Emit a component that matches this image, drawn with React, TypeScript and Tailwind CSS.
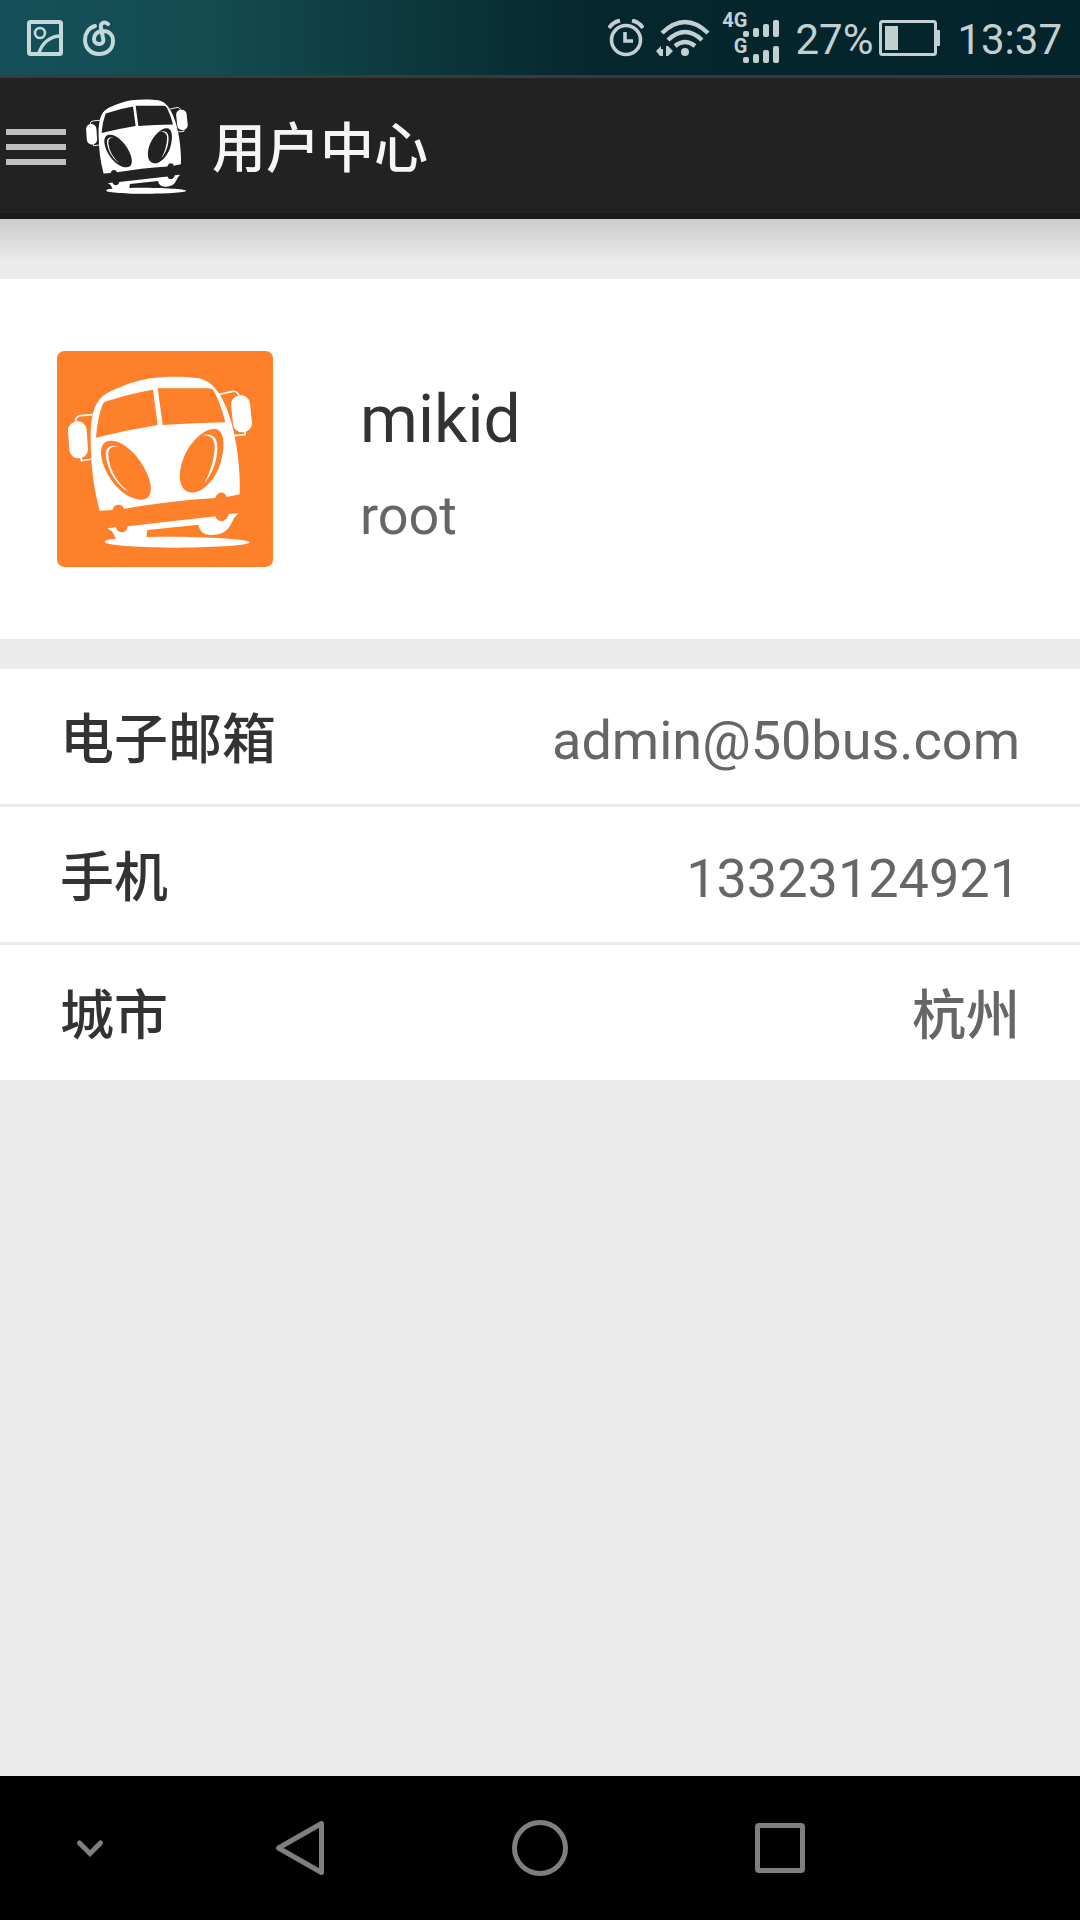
import React from "react";

const details = [
  { label: "电子邮箱", value: "admin@50bus.com", weight: "font-normal" },
  { label: "手机", value: "13323124921", weight: "font-normal" },
  { label: "城市", value: "杭州", weight: "font-medium" },
];

/* The bus mascot: white body, with the windows and lamps in the colour behind it. */
function Bus({ hole }: { hole: string }) {
  return (
    <>
      <g fill="none" stroke="#fff" strokeWidth="5">
        <path d="M128 208 L92 211 Q76 213 76 232" />
        <path d="M93 334 L94 346 L130 341" />
        <path d="M508 147 L548 138 Q564 136 568 156" />
        <path d="M586 256 L585 268 L550 271" />
      </g>
      <rect x="56" y="228" width="56" height="111" rx="27" fill="#fff" transform="rotate(-4 84 283)" />
      <rect x="546" y="150" width="57" height="111" rx="27" fill="#fff" transform="rotate(-6 574 205)" />
      <path
        fill="#fff"
        d="M149 496 C131 430 123 360 122 290 C121 235 126 180 156 154 C185 132 245 109 300 99 C350 92 410 93 446 99 C475 105 492 122 508 146 C532 184 549 238 559 300 C567 352 571 400 569 447 L530 455 C526 436 501 437 496 458 C400 464 310 475 222 490 C216 473 192 474 187 494 Z"
      />
      <g className={hole}>
        <path d="M158 177 Q160 170 170 168 Q238 145 309 133 L323 239 Q230 254 138 277 Q142 220 158 177 Z" />
        <path d="M323 129 H475 Q487 129 493 139 Q514 180 526 231 Q430 233 338 239 Z" />
        <path d="M172 288 C205 278 252 314 281 364 C306 408 310 447 290 459 C265 473 215 450 184 404 C150 354 141 299 172 288 Z" />
        <path d="M495 251 C524 254 527 304 511 355 C494 408 452 447 420 441 C386 434 382 386 401 337 C421 287 465 247 495 251 Z" />
      </g>
      <path
        fill="#fff"
        d="M205 303 C180 297 164 306 168 335 C174 380 205 424 234 438 C204 414 180 376 176 338 C172 312 180 303 205 303 Z"
      />
      <path
        fill="#fff"
        d="M455 269 C486 262 503 275 502 307 C502 348 486 386 463 414 C480 382 492 345 494 309 C495 280 482 269 455 269 Z"
      />
      <path
        fill="#fff"
        fillRule="evenodd"
        d="M172 549 L198 546 C201 567 232 566 233 543 L496 513 C500 532 530 534 536 506 L565 504 L552 519 C540 542 532 570 482 569 C460 567 449 558 445 538 L292 554 L289 575 C420 572 598 580 598 591 C598 602 470 607 380 607 C280 607 164 600 164 590 C164 584 180 581 198 580 L186 558 Z"
      />
    </>
  );
}

function SignalBars() {
  return (
    <svg className="h-[18px] w-9" viewBox="0 0 36 18" fill="#c3d0d2" aria-hidden="true">
      <rect x="0" y="11" width="6" height="6" rx="2" />
      <rect x="10" y="8" width="6" height="9" rx="2" />
      <rect x="20" y="4" width="6" height="13" rx="2" />
      <rect x="30" y="0" width="6" height="17" rx="2" />
    </svg>
  );
}

function StatusBar() {
  return (
    <div className="flex h-[78px] items-center justify-between border-b-3 border-[#393b3b] bg-[linear-gradient(to_right,#15505a,#134b50_20%,#0e3d43_33%,#06272d_55%,#04242b)] pr-[18px] pl-[27px] text-[#c3d0d2]">
      <div className="flex items-center gap-5">
        <svg className="size-9" viewBox="0 0 36 36" fill="none" stroke="#c3d8da" strokeWidth="4" aria-label="截图">
          <rect x="2" y="2" width="32" height="32" rx="1.5" />
          <circle cx="13" cy="13" r="5" strokeWidth="2.6" />
          <path d="M12 33 C15 23 23 16 34 16" strokeWidth="3.4" />
        </svg>
        <svg className="h-9 w-8" viewBox="0 0 32 36" fill="none" stroke="#c3d8da" strokeWidth="4" strokeLinecap="round" aria-label="音乐">
          <path d="M12 6 C5 8 2 14 2 20 C2 28 8 34 16 34 C24 34 30 29 30 21 C30 15 26 11 20 11 C14 11 11 15 11 19 C11 22 13 24 16 24 C20 24 21 21 20 18 L18 8 C17 3 21 1 25 4" />
        </svg>
      </div>
      <div className="flex items-center">
        <svg className="mr-3 h-[38px] w-9" viewBox="0 0 36 38" fill="none" stroke="#c3d0d2" strokeWidth="3.6" aria-label="闹钟">
          <circle cx="18" cy="21" r="14.5" />
          <path d="M17 13 V22 H25" />
          <path d="M1 9 Q5 3 12 1.500" strokeWidth="4" />
          <path d="M35 9 Q31 3 24 1.500" strokeWidth="4" />
        </svg>
        <svg className="mr-3 h-[38px] w-[54px]" viewBox="0 0 54 38" fill="none" stroke="#c3d0d2" strokeWidth="4.400" aria-label="无线网络">
          <path d="M6 14 Q29 -8 52 14" />
          <path d="M12 21 Q29 5 46 21" />
          <path d="M19 27 Q29 19 39 27" />
          <circle cx="29" cy="33" r="4" fill="#c3d0d2" stroke="none" />
          <path d="M0 32 L5 27 V30 H7 V37 H4 Z M10 27 H12 L17 32 L12 37 H10 Z" fill="#c3d0d2" stroke="none" />
        </svg>
        <div className="mr-4 flex flex-col items-end text-xl leading-[26px] font-bold">
          <div className="flex h-[26px] items-end">
            <span className="-mr-1 self-start leading-4">4G</span>
            <SignalBars />
          </div>
          <div className="flex h-[26px] items-end">
            <span className="-mr-1 self-start leading-4">G</span>
            <SignalBars />
          </div>
        </div>
        <span className="pt-1 text-[42px] leading-[52px]">27%</span>
        <svg className="mr-4 ml-1.5 h-9 w-[62px]" viewBox="0 0 62 36" aria-label="电池">
          <rect x="1.500" y="1.500" width="55" height="33" rx="2" fill="none" stroke="#c3d0d2" strokeWidth="3" />
          <rect x="6" y="6" width="13" height="24" fill="#c3d0d2" />
          <rect x="57" y="10" width="4" height="16" rx="1" fill="#c3d0d2" />
        </svg>
        <time className="pt-1 text-[42px] leading-[52px]">13:37</time>
      </div>
    </div>
  );
}

export default function App() {
  return (
    <div className="flex min-h-screen flex-col bg-[#ebebeb] font-[Roboto,'Noto_Sans_CJK_SC',sans-serif] text-[#333]">
      <StatusBar />
      <header className="flex h-[141px] items-center border-b-6 border-[#1a1a1a] bg-[#222] pt-0.5 pl-1.5">
        <button type="button" aria-label="菜单" className="flex w-[60px] flex-col gap-[9px]">
          <span className="h-1.5 bg-[#c0c0c0]" />
          <span className="h-1.5 bg-[#c0c0c0]" />
          <span className="h-1.5 bg-[#c0c0c0]" />
        </button>
        <svg className="mr-6 ml-5 h-[95px] w-[102px]" viewBox="54 92 553 516" aria-label="50bus">
          <Bus hole="fill-[#222]" />
        </svg>
        <h1 className="pt-1.5 text-[54px] leading-[72px] font-medium text-[#f5f5f5]">用户中心</h1>
      </header>

      <main className="flex-1">
        <div className="h-[60px] bg-linear-to-b from-[#cbcbcb] to-[#ebebeb] to-70%" />

        <section className="flex h-[360px] items-center gap-[87px] bg-white px-[57px]">
          <svg className="size-[216px] shrink-0" viewBox="21 17 648 648" aria-label="头像">
            <rect x="21" y="17" width="648" height="648" rx="22" fill="#ff802b" />
            <Bus hole="fill-[#ff802b]" />
          </svg>
          <div className="pt-[18px]">
            <p className="text-[66px] leading-[96px]">mikid</p>
            <p className="text-[54px] leading-[96px] text-[#666]">root</p>
          </div>
        </section>

        <dl className="mt-[30px] flex flex-col gap-[3px]">
          {details.map((item) => (
            <div key={item.label} className="flex h-[135px] items-center justify-between bg-white px-[60px] pt-2 text-[54px] leading-[72px]">
              <dt className="font-medium">{item.label}</dt>
              <dd className={`text-[#666] ${item.weight}`}>{item.value}</dd>
            </div>
          ))}
        </dl>
      </main>

      <nav className="grid h-36 grid-cols-[3fr_4fr_4fr_4fr_3fr] bg-black">
        <button type="button" aria-label="收起" className="flex items-center justify-center">
          <svg className="size-16" viewBox="0 0 64 64" fill="none" stroke="#7f7f7f" strokeWidth="5" strokeLinecap="round">
            <path d="M21.500 27 L32 37.500 L42.500 27" />
          </svg>
        </button>
        <button type="button" aria-label="返回" className="flex items-center justify-center">
          <svg className="size-16" viewBox="0 0 64 64" fill="none" stroke="#7f7f7f" strokeWidth="5" strokeLinejoin="round">
            <path d="M53.500 7.500 V56.500 L10.500 32 Z" />
          </svg>
        </button>
        <button type="button" aria-label="主屏幕" className="flex items-center justify-center">
          <svg className="size-16" viewBox="0 0 64 64" fill="none" stroke="#7f7f7f" strokeWidth="5">
            <circle cx="32" cy="32" r="25.500" />
          </svg>
        </button>
        <button type="button" aria-label="最近任务" className="flex items-center justify-center">
          <svg className="size-16" viewBox="0 0 64 64" fill="none" stroke="#7f7f7f" strokeWidth="5">
            <rect x="9.500" y="9.500" width="45" height="45" rx="1.500" />
          </svg>
        </button>
      </nav>
    </div>
  );
}
